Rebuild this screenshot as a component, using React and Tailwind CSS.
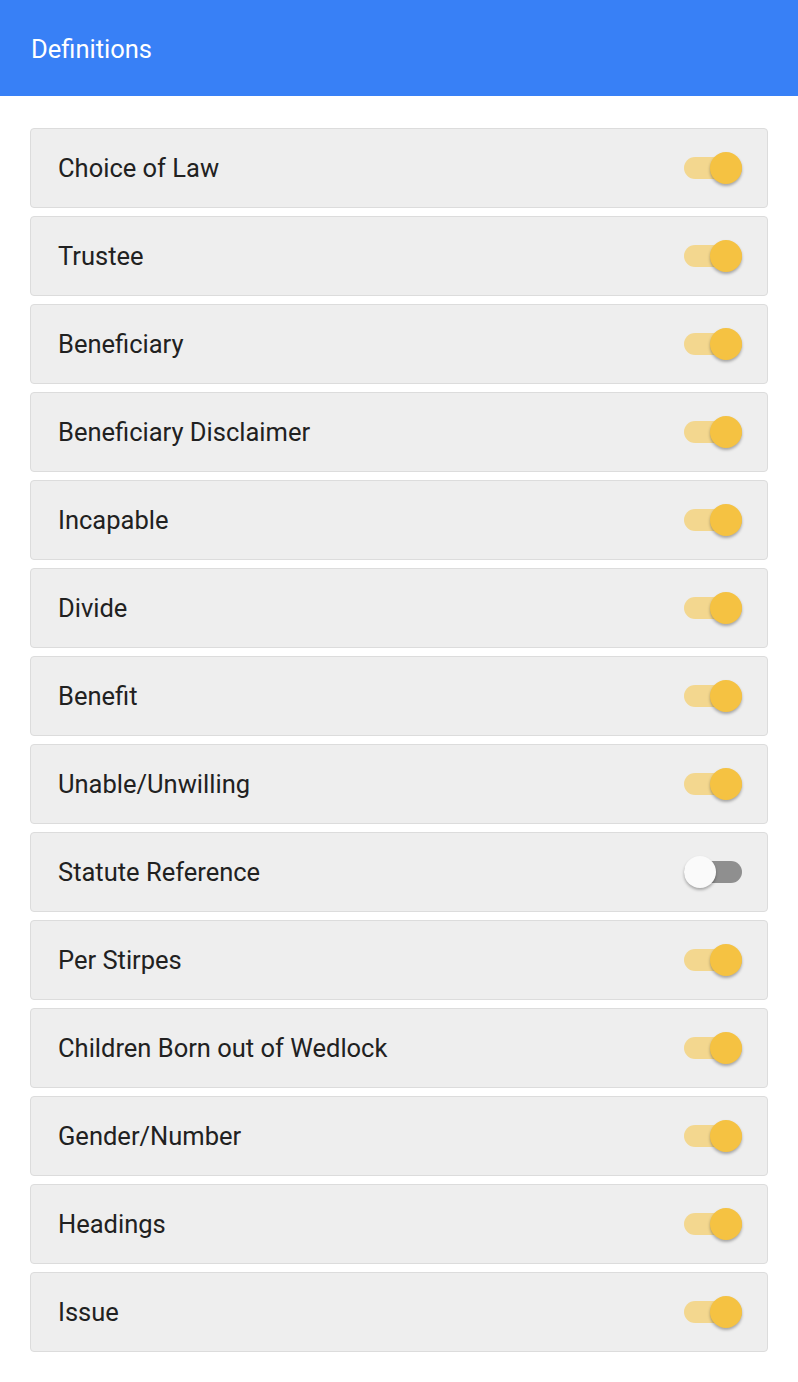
import React, { useState } from 'react';

const items = [
  ['Choice of Law', true],
  ['Trustee', true],
  ['Beneficiary', true],
  ['Beneficiary Disclaimer', true],
  ['Incapable', true],
  ['Divide', true],
  ['Benefit', true],
  ['Unable/Unwilling', true],
  ['Statute Reference', false],
  ['Per Stirpes', true],
  ['Children Born out of Wedlock', true],
  ['Gender/Number', true],
  ['Headings', true],
  ['Issue', true],
];

function Toggle({ on, onClick }) {
  return (
    <button onClick={onClick} className="relative w-[58px] h-[32px] flex items-center">
      <span className={`absolute left-0 right-0 h-[22px] rounded-full ${on ? 'bg-[#f3d78f]' : 'bg-[#8f8f8f]'}`} />
      <span
        className={`absolute top-0 w-[32px] h-[32px] rounded-full shadow-[0_2px_3px_rgba(0,0,0,0.3)] ${
          on ? 'right-0 bg-[#f5c242]' : 'left-0 bg-[#fafafa]'
        }`}
      />
    </button>
  );
}

export default function App() {
  const [state, setState] = useState(items.map(i => i[1]));

  return (
    <div className="min-h-screen bg-white" style={{ fontFamily: 'Roboto, "Liberation Sans", sans-serif' }}>
      {/* Header */}
      <div className="h-[96px] bg-[#3880f6] flex items-center px-[31px]">
        <h1 className="text-white text-[25.5px] pt-[2px]">Definitions</h1>
      </div>

      <div className="px-[30px] pt-[32px] pb-[30px] flex flex-col gap-[8px]">
        {items.map(([label], i) => (
          <div
            key={label}
            className="h-[80px] bg-[#eeeeee] border border-[#dcdcdc] rounded-[4px] flex items-center justify-between pl-[27px] pr-[25px]"
          >
            <span className="text-[25.5px] text-[#212121] pt-[1px]">{label}</span>
            <Toggle
              on={state[i]}
              onClick={() => setState(s => s.map((v, j) => (j === i ? !v : v)))}
            />
          </div>
        ))}
      </div>
    </div>
  );
}
